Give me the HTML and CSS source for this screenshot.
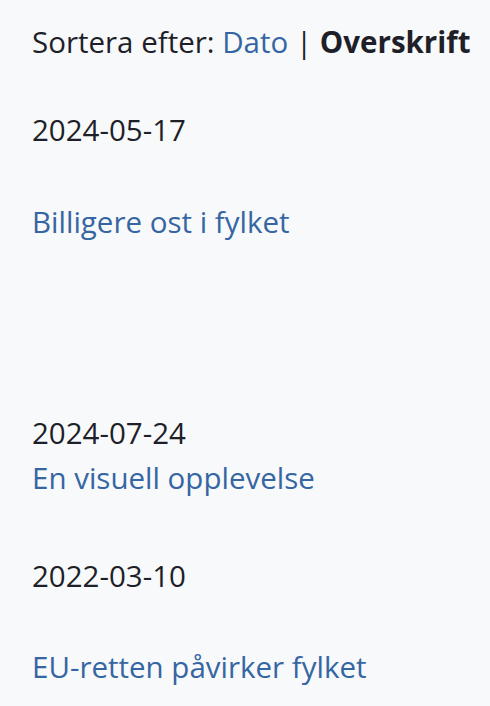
FILE: index.html
```html
<!DOCTYPE html>
<html lang="no">
<head>
    <meta charset="UTF-8">
    <meta name="viewport" content="width=device-width, initial-scale=1.0">
    <title>Artikler</title>
    <link rel="stylesheet" href="styles.css">
</head>
<body>
    <div class="container">
        <p class="sort">Sortera efter: <a href="#">Dato</a> | <strong>Overskrift</strong></p>

        <div class="article first">
            <p class="date">2024-05-17</p>
            <a class="title" href="#">Billigere ost i fylket</a>
        </div>

        <div class="article second">
            <p class="date">2024-07-24</p>
            <a class="title" href="#">En visuell opplevelse</a>
        </div>

        <div class="article third">
            <p class="date">2022-03-10</p>
            <a class="title" href="#">EU-retten påvirker fylket</a>
        </div>
    </div>
</body>
</html>
```

FILE: styles.css
```css
body {
    font-family: "Open Sans", "Noto Sans", sans-serif;
    margin: 0;
    padding: 0;
    background-color: #f8f9fa;
    color: #1e1f29;
}

.container {
    padding: 19px 0 19px 32px;
    font-size: 29.5px;
    line-height: 45px;
    white-space: nowrap;
}

p {
    margin: 0;
}

a {
    color: #3566a3;
    text-decoration: none;
}

.sort {
    margin-bottom: 43px;
}

.sort strong {
    font-weight: 700;
}

.article .title {
    display: block;
}

.first .date {
    margin-bottom: 47px;
}

.first {
    margin-bottom: 166px;
}

.second {
    margin-bottom: 53px;
}

.third .date {
    margin-bottom: 46px;
}
```
